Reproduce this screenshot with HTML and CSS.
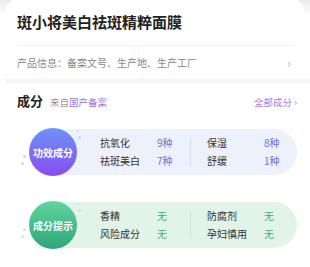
FILE: index.html
```html
<!DOCTYPE html>
<html lang="zh">
<head>
  <meta charset="UTF-8">
  <title>斑小将美白祛斑精粹面膜</title>
  <link rel="stylesheet" href="styles.css">
</head>
<body>

  <div class="sheet">
    <div class="card">
      <h1 class="title">斑小将美白祛斑精粹面膜</h1>
      <div class="info">
        <span>产品信息：备案文号、生产地、生产工厂</span>
        <span class="arrow">›</span>
      </div>
    </div>

    <div class="gap"></div>

    <div class="section">
      <div class="section-head">
        <span class="section-title">成分</span>
        <span class="source">来自<em>国产备案</em></span>
        <span class="all">全部成分 ›</span>
      </div>

      <!-- 功效成分 -->
      <div class="pill pill-blue">
        <div class="badge">
          功效成分
          <i class="dot d1"></i><i class="dot d2"></i><i class="dot d3"></i><i class="dot d4"></i>
        </div>
        <div class="pill-body">
          <div class="col">
            <span class="name">抗氧化</span><span class="num">9种</span>
            <span class="name">祛斑美白</span><span class="num">7种</span>
          </div>
          <div class="line"></div>
          <div class="col">
            <span class="name">保湿</span><span class="num">8种</span>
            <span class="name">舒缓</span><span class="num">1种</span>
          </div>
        </div>
      </div>

      <!-- 成分提示 -->
      <div class="pill pill-green">
        <div class="badge">
          成分提示
          <i class="dot d1"></i><i class="dot d2"></i><i class="dot d3"></i><i class="dot d4"></i>
        </div>
        <div class="pill-body">
          <div class="col">
            <span class="name">香精</span><span class="num">无</span>
            <span class="name">风险成分</span><span class="num">无</span>
          </div>
          <div class="line"></div>
          <div class="col">
            <span class="name">防腐剂</span><span class="num">无</span>
            <span class="name">孕妇慎用</span><span class="num">无</span>
          </div>
        </div>
      </div>
    </div>
  </div>

</body>
</html>
```

FILE: styles.css
```css
body {
  margin: 0;
  font-family: "Noto Sans CJK SC", "Noto Sans", sans-serif;
  background: #fff;
  color: #333;
}
.sheet {
  background: linear-gradient(#e4e4e4, #fff 22px);
  padding-top: 0;
}
.card {
  background: #fff;
  margin: -6px 5px 0 5px;
  border-radius: 22px 22px 0 0;
  padding: 0 10px 0 12px;
}
.title {
  margin: 0;
  padding: 17px 0 12px 0;
  font-size: 15px;
  font-weight: bold;
  color: #222;
  line-height: 22px;
  border-bottom: 1px solid #f2f2f2;
}
.info {
  display: flex;
  justify-content: space-between;
  align-items: center;
  height: 33px;
  font-size: 10px;
  color: #888;
}
.arrow {
  color: #bbb;
  font-size: 13px;
  padding-right: 4px;
}
.gap {
  height: 4px;
  margin-left: 5px;
  background: #f5f5f5;
}
.section {
  padding: 0 13px 20px 17px;
}
.section-head {
  display: flex;
  align-items: baseline;
  height: 36px;
  line-height: 36px;
}
.section-title {
  font-size: 13px;
  font-weight: bold;
  color: #222;
  margin-right: 7px;
}
.source {
  font-size: 9.5px;
  color: #999;
}
.source em {
  font-style: normal;
  color: #9a72e6;
}
.all {
  margin-left: auto;
  font-size: 9.5px;
  color: #a37ce8;
}
.pill {
  display: flex;
  align-items: center;
  margin: 9px 0 0 12px;
  width: 261px;
}
.pill + .pill {
  margin-top: 25px;
}
.badge {
  position: relative;
  z-index: 1;
  flex: none;
  width: 48px;
  height: 48px;
  border-radius: 50%;
  display: flex;
  align-items: center;
  justify-content: center;
  color: #fff;
  font-size: 10px;
  font-weight: bold;
}
.pill-blue .badge {
  background: linear-gradient(#6b93f8, #8a4cf0);
}
.pill-green .badge {
  background: linear-gradient(#5fd69c, #2ea67a);
}
.dot {
  position: absolute;
  border-radius: 50%;
}
.pill-blue .dot { background: #c9d6fb; }
.pill-green .dot { background: #c6ebd6; }
.d1 { width: 3px; height: 3px; right: -4px; top: 8px; }
.d2 { width: 2px; height: 2px; right: -2px; top: 2px; }
.d3 { width: 3px; height: 3px; left: -6px; bottom: 18px; }
.d4 { width: 3px; height: 3px; left: -8px; bottom: 11px; }
.pill-body {
  flex: 1;
  display: flex;
  align-items: center;
  height: 46px;
  margin-left: -20px;
  padding-left: 43px;
  border-radius: 0 23px 23px 0;
}
.pill-blue .pill-body { background: #edf1fc; }
.pill-green .pill-body { background: #e2f3e7; }
.col {
  display: grid;
  grid-template-columns: 57px 33px;
  row-gap: 0;
  font-size: 10px;
  line-height: 18px;
}
.col + .col {
  grid-template-columns: 55px 30px;
}
.name {
  color: #333;
}
.pill-blue .num { color: #6f6fd8; }
.pill-green .num { color: #3cb46a; }
.line {
  width: 1px;
  height: 28px;
  margin-right: 16px;
}
.pill-blue .line { background: #d6dcf0; }
.pill-green .line { background: #cde6d4; }
```
